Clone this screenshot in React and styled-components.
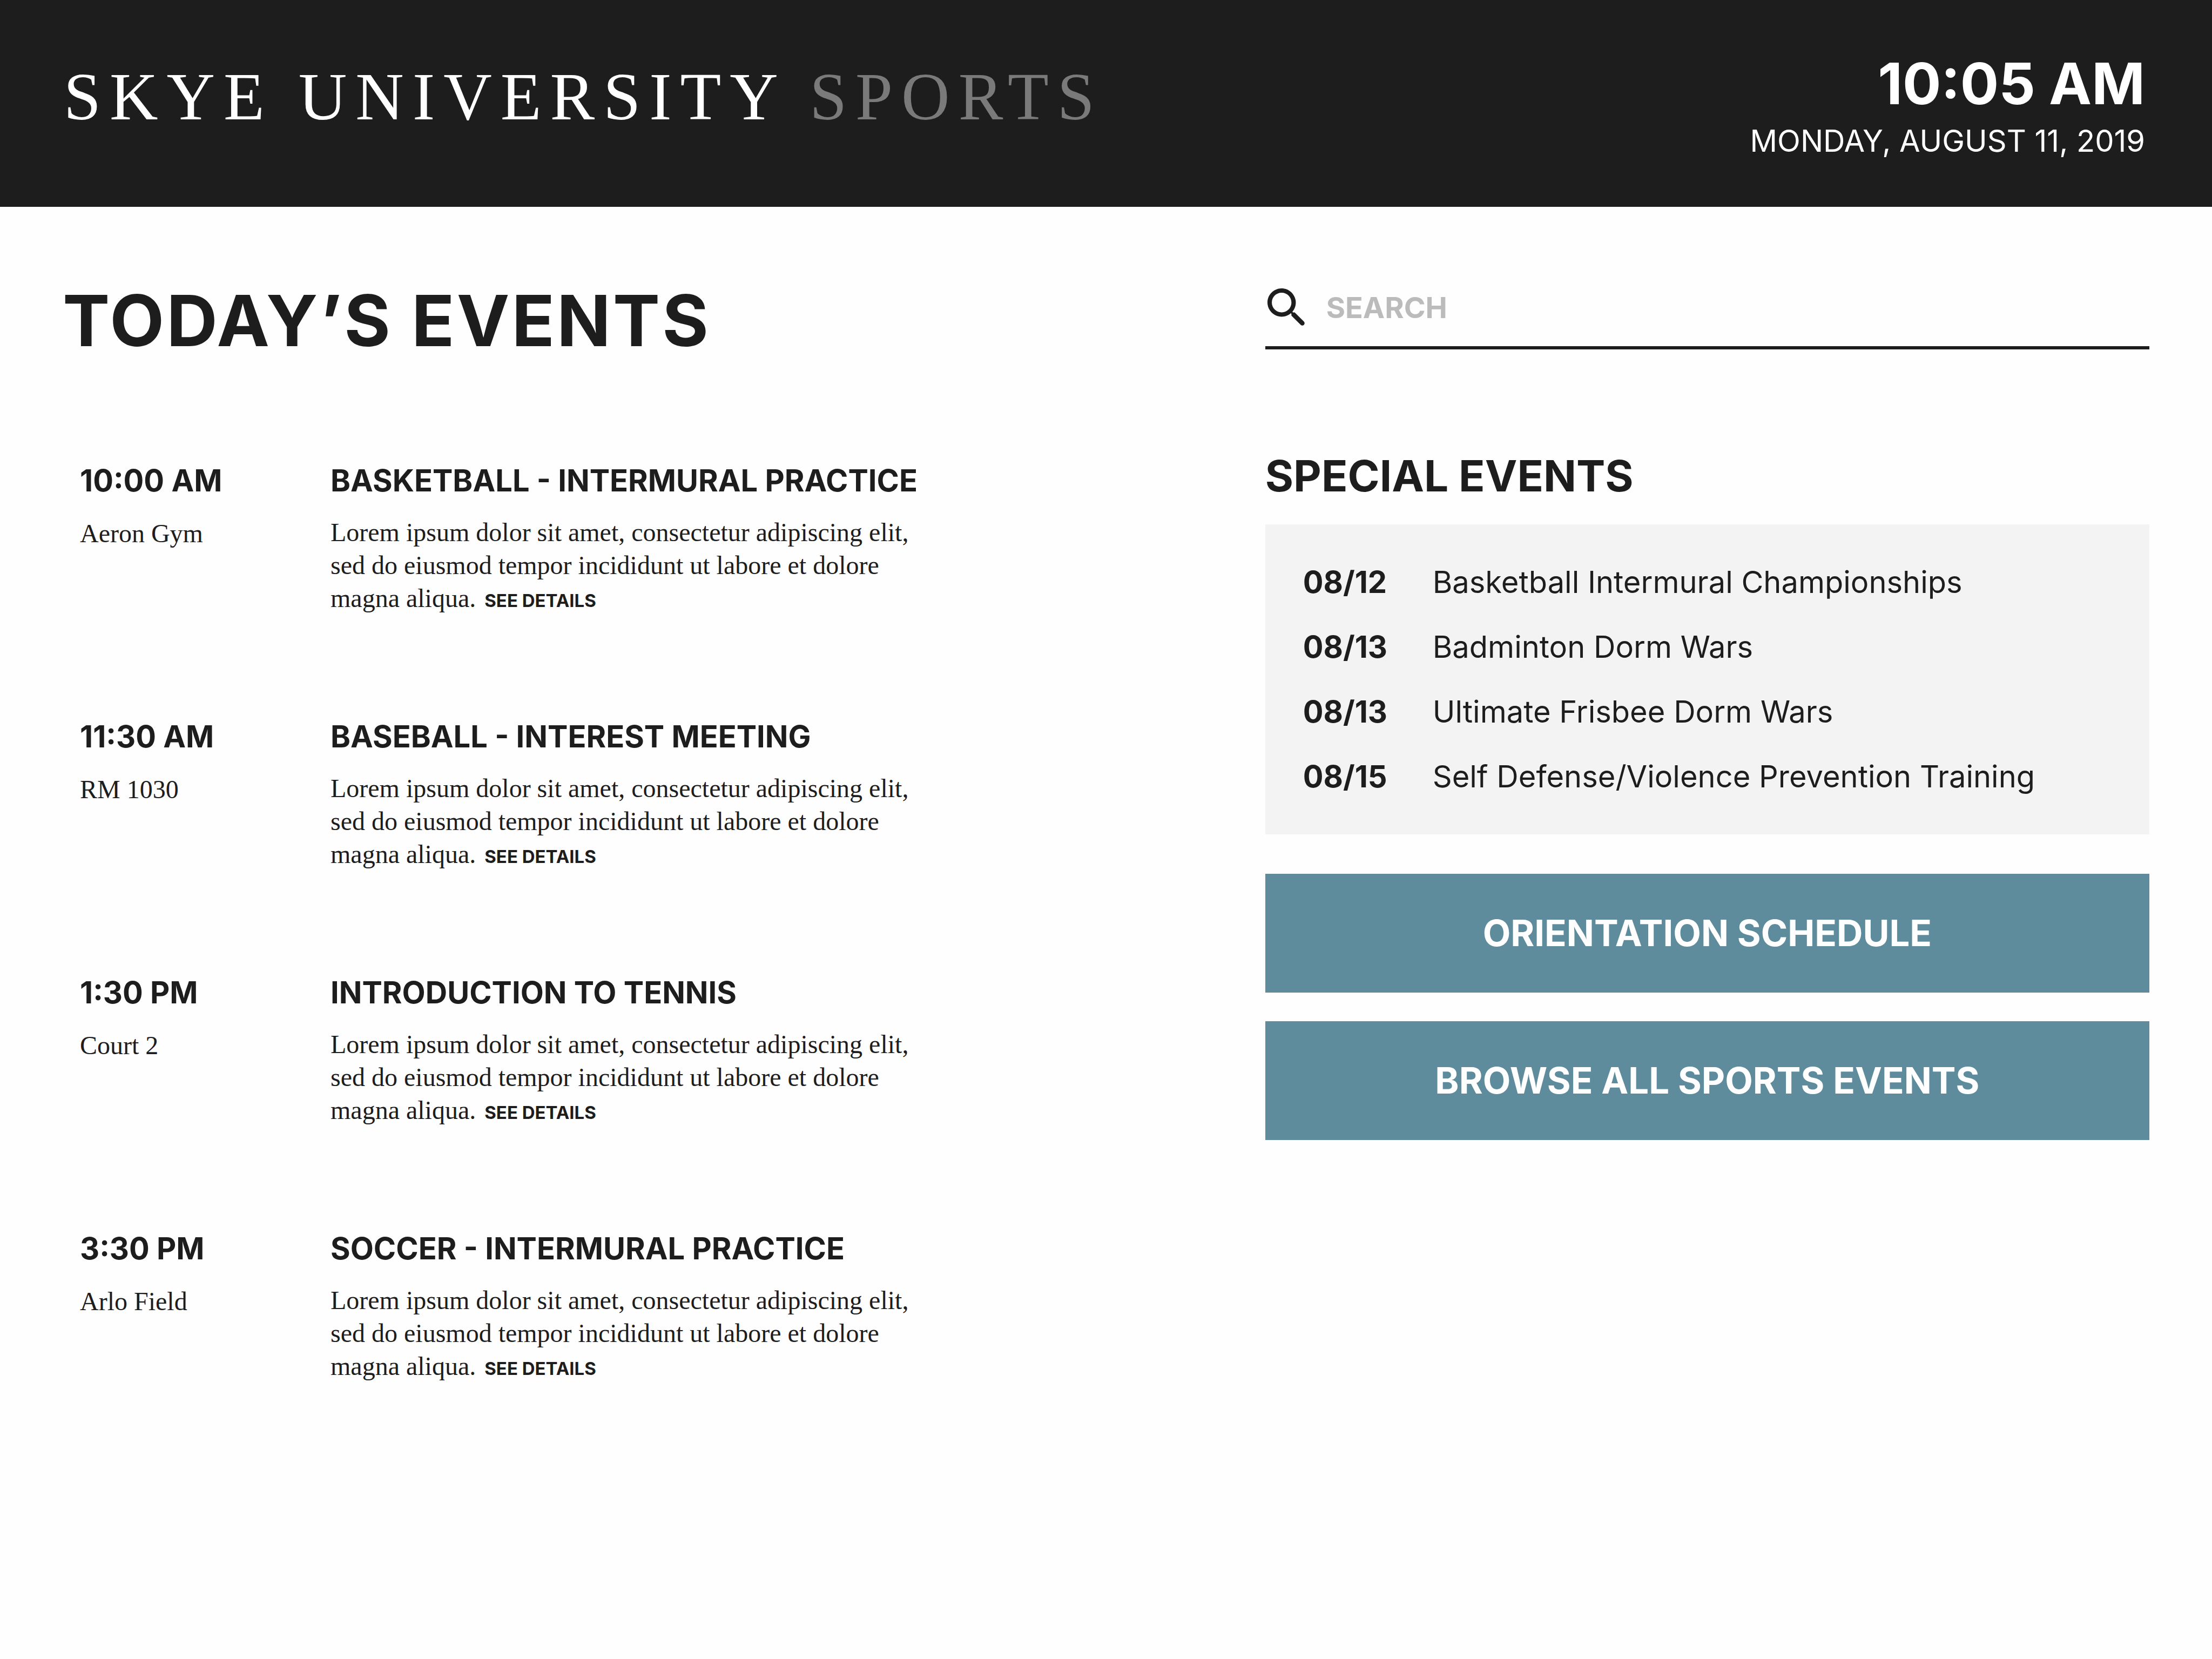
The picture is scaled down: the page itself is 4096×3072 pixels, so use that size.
import React from "react";
import styled, { createGlobalStyle } from "styled-components";

const ink = "#1d1d1d";
const sans = `Inter, "Open Sans", "Liberation Sans", sans-serif`;
const serif = `"Liberation Serif", "Times New Roman", serif`;

const GlobalStyle = createGlobalStyle`
  *, *::before, *::after { box-sizing: border-box; }
  body { margin: 0; background: #fefefe; color: ${ink}; font-family: ${sans}; }
  h1, h2, h3, p, ul { margin: 0; padding: 0; }
  ul { list-style: none; }
`;

const Header = styled.header`
  display: flex;
  justify-content: space-between;
  align-items: flex-start;
  padding: 95px 124px 88px 118px;
  background: ${ink};
  color: #fff;
`;

const Brand = styled.div`
  font: 400 124px/170px ${serif};
  letter-spacing: 16px;
`;

const BrandAccent = styled.span`
  color: #7a7a7a;
`;

const Clock = styled.div`
  display: flex;
  flex-direction: column;
  gap: 12px;
  text-align: right;
`;

const Time = styled.time`
  font-size: 106px;
  font-weight: 700;
  line-height: 120px;
`;

const Day = styled.time`
  font-size: 56px;
  line-height: 68px;
`;

const Main = styled.main`
  display: grid;
  grid-template-columns: 34fr 25fr;
  align-items: start;
  padding: 133px 116px;
`;

const PageTitle = styled.h1`
  font-size: 131px;
  font-weight: 700;
  line-height: 156px;
  letter-spacing: 4px;
  margin-bottom: 178px;
`;

const EventList = styled.ul`
  display: flex;
  flex-direction: column;
  gap: 186px;
  padding-left: 32px;
`;

const EventRow = styled.li`
  display: grid;
  grid-template-columns: 464px minmax(0, 1100px);
`;

const EventCell = styled.div`
  display: flex;
  flex-direction: column;
  gap: 25px;
`;

const EventTime = styled.time`
  font-size: 56px;
  font-weight: 650;
  line-height: 80px;
`;

const EventName = styled.h2`
  font-size: 56px;
  font-weight: 650;
  line-height: 80px;
  white-space: nowrap;
`;

const Place = styled.p`
  font: 400 48px/66px ${serif};
`;

const Summary = styled.p`
  font: 400 48px/61px ${serif};
`;

const SummaryEnd = styled.span`
  white-space: nowrap;
`;

const DetailsLink = styled.a`
  margin-left: 4px;
  font: 650 33px/33px ${sans};
  color: inherit;
  text-decoration: none;
`;

const Search = styled.label`
  display: flex;
  align-items: center;
  gap: 38px;
  height: 131px;
  padding: 0 4px 18px;
  border-bottom: 6px solid ${ink};
  margin-bottom: 186px;
`;

const SearchIcon = styled.svg`
  flex: none;
  width: 71px;
  height: 71px;
  fill: ${ink};
`;

const SearchInput = styled.input`
  flex: 1;
  min-width: 0;
  padding: 0;
  border: 0;
  outline: 0;
  background: transparent;
  color: ${ink};
  font: 650 54px/80px ${sans};
  &::placeholder { color: #bbb; opacity: 1; }
`;

const SectionTitle = styled.h2`
  font-size: 80px;
  font-weight: 650;
  line-height: 96px;
  margin-bottom: 42px;
`;

const Panel = styled.ul`
  padding: 47px 70px;
  background: #f3f3f3;
`;

const PanelRow = styled.li`
  display: grid;
  grid-template-columns: 240px 1fr;
  font-size: 56px;
  line-height: 120px;
`;

const PanelDate = styled.time`
  font-weight: 700;
`;

const Actions = styled.div`
  display: flex;
  flex-direction: column;
  gap: 53px;
  margin-top: 73px;
`;

const ActionButton = styled.button`
  padding: 62px 40px;
  border: 0;
  background: #5f8c9c;
  color: #fff;
  font: 650 67px/96px ${sans};
  cursor: pointer;
`;

const events = [
  { time: "10:00 AM", place: "Aeron Gym", name: "BASKETBALL - INTERMURAL PRACTICE" },
  { time: "11:30 AM", place: "RM 1030", name: "BASEBALL - INTEREST MEETING" },
  { time: "1:30 PM", place: "Court 2", name: "INTRODUCTION TO TENNIS" },
  { time: "3:30 PM", place: "Arlo Field", name: "SOCCER - INTERMURAL PRACTICE" },
];

const specials = [
  { date: "08/12", name: "Basketball Intermural Championships" },
  { date: "08/13", name: "Badminton Dorm Wars" },
  { date: "08/13", name: "Ultimate Frisbee Dorm Wars" },
  { date: "08/15", name: "Self Defense/Violence Prevention Training" },
];

const actions = ["ORIENTATION SCHEDULE", "BROWSE ALL SPORTS EVENTS"];

export default function App() {
  return (
    <>
      <GlobalStyle />
      <Header>
        <Brand>
          SKYE UNIVERSITY <BrandAccent>SPORTS</BrandAccent>
        </Brand>
        <Clock>
          <Time>10:05 AM</Time>
          <Day>MONDAY, AUGUST 11, 2019</Day>
        </Clock>
      </Header>
      <Main>
        <section>
          <PageTitle>TODAY’S EVENTS</PageTitle>
          <EventList>
            {events.map((e) => (
              <EventRow key={e.time}>
                <EventCell>
                  <EventTime>{e.time}</EventTime>
                  <Place>{e.place}</Place>
                </EventCell>
                <EventCell>
                  <EventName>{e.name}</EventName>
                  <Summary>
                    Lorem ipsum dolor sit amet, consectetur adipiscing elit, sed do eiusmod
                    tempor incididunt ut labore et dolore{" "}
                    <SummaryEnd>
                      magna aliqua. <DetailsLink href="#details">SEE DETAILS</DetailsLink>
                    </SummaryEnd>
                  </Summary>
                </EventCell>
              </EventRow>
            ))}
          </EventList>
        </section>
        <section>
          <Search>
            <SearchIcon viewBox="3 3 17.6 17.6" aria-hidden="true">
              <path d="M15.5 14h-.79l-.28-.27c1.2-1.4 1.82-3.31 1.48-5.34-.47-2.78-2.79-5-5.59-5.34-4.23-.52-7.79 3.04-7.27 7.27.34 2.8 2.56 5.12 5.34 5.59 2.03.34 3.94-.28 5.34-1.48l.27.28v.79l4.25 4.25c.41.41 1.08.41 1.49 0 .41-.41.41-1.08 0-1.49L15.5 14zm-6 0C7.01 14 5 11.99 5 9.5S7.01 5 9.5 5 14 7.01 14 9.5 11.99 14 9.5 14z" />
            </SearchIcon>
            <SearchInput type="search" placeholder="SEARCH" aria-label="Search" />
          </Search>
          <SectionTitle>SPECIAL EVENTS</SectionTitle>
          <Panel>
            {specials.map((s) => (
              <PanelRow key={s.name}>
                <PanelDate>{s.date}</PanelDate>
                <span>{s.name}</span>
              </PanelRow>
            ))}
          </Panel>
          <Actions>
            {actions.map((label) => (
              <ActionButton key={label} type="button">
                {label}
              </ActionButton>
            ))}
          </Actions>
        </section>
      </Main>
    </>
  );
}
